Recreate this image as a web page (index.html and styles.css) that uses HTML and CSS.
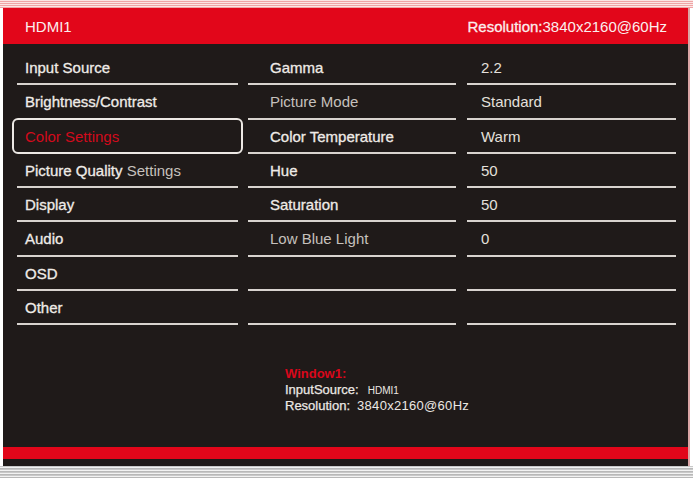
FILE: index.html
```html
<!DOCTYPE html>
<html>
<head>
<meta charset="utf-8">
<link rel="stylesheet" href="styles.css">
</head>
<body>
<div class="stripes-top"></div>
<div class="frame">
  <div class="header">
    <span class="src">HDMI1</span>
    <span class="res"><span class="strong">Resolution:</span>3840x2160@60Hz</span>
  </div>
  <div class="main">
    <div class="cols">
      <div class="col col-menu">
        <div class="row strong">Input Source</div>
        <div class="row strong before-sel">Brightness/Contrast</div>
        <div class="row selected">Color Settings</div>
        <div class="row"><span class="strong">Picture Quality</span> <span class="dim">Settings</span></div>
        <div class="row strong">Display</div>
        <div class="row strong">Audio</div>
        <div class="row strong">OSD</div>
        <div class="row strong">Other</div>
      </div>
      <div class="col col-param">
        <div class="row strong">Gamma</div>
        <div class="row dim">Picture Mode</div>
        <div class="row strong">Color Temperature</div>
        <div class="row strong">Hue</div>
        <div class="row strong">Saturation</div>
        <div class="row dim">Low Blue Light</div>
        <div class="row"></div>
        <div class="row"></div>
      </div>
      <div class="col col-value">
        <div class="row val">2.2</div>
        <div class="row val">Standard</div>
        <div class="row val">Warm</div>
        <div class="row val">50</div>
        <div class="row val">50</div>
        <div class="row val">0</div>
        <div class="row"></div>
        <div class="row"></div>
      </div>
    </div>
    <div class="info">
      <div class="info-title">Window1:</div>
      <div class="info-line">InputSource:<span class="small">HDMI1</span></div>
      <div class="info-line">Resolution:<span class="wide">3840x2160@60Hz</span></div>
    </div>
  </div>
  <div class="redbar"></div>
  <div class="darkstrip"></div>
</div>
<div class="stripes-bottom"></div>
</body>
</html>
```
FILE: styles.css
```css
html, body {
  margin: 0;
  padding: 0;
  background: #ffffff;
}
body {
  width: 693px;
  height: 478px;
  overflow: hidden;
  font-family: "Liberation Sans", Arial, sans-serif;
  font-size: 15px;
}
.stripes-top {
  height: 8px;
  background: repeating-linear-gradient(to bottom, #fbe6e4 0, #fbe6e4 1px, #f0a4a6 1px, #f0a4a6 2px);
}
.frame {
  margin-left: 3px;
  width: 685px;
  border-right: 2px solid #dba6a6;
}
.header {
  height: 36px;
  background: #e2061a;
  color: #fbeeee;
  display: flex;
  align-items: center;
  justify-content: space-between;
  padding: 0 22px 0 22px;
  box-sizing: border-box;
}
.header .res {
  margin-right: -1px;
}
.strong {
  -webkit-text-stroke: 0.3px currentColor;
}
.main {
  height: 403px;
  background: #1f1a19;
  box-sizing: border-box;
  padding-top: 7px;
  color: #efebe7;
}
.cols {
  display: flex;
  padding-left: 14px;
}
.col-menu { width: 221px; margin-right: 10px; }
.col-param { width: 208px; margin-right: 11px; }
.col-value { width: 209px; }
.row {
  height: 34.3px;
  padding-top: 2px;
  line-height: 30.3px;
  box-sizing: border-box;
  border-bottom: 2px solid #d8d3cf;
  white-space: nowrap;
}
.col-menu .row { padding-left: 8px; }
.col-param .row { padding-left: 22px; }
.col-value .row { padding-left: 14px; }
.dim {
  color: #c6c1bd;
  -webkit-text-stroke: 0;
}
.val { color: #e4e0dc; }
.col-menu .row.before-sel {
  border-bottom-color: transparent;
}
.col-menu .row.selected {
  margin: -2px -5px 0 -5px;
  height: 36.3px;
  border: 2px solid #ece8e4;
  border-radius: 6px;
  padding-left: 11px;
  color: #d20a1c;
}
.info {
  margin-top: 41px;
  margin-left: 282px;
  line-height: 15.5px;
  font-size: 13px;
  color: #ece8e4;
}
.info-title {
  color: #d9071b;
  font-weight: bold;
}
.info-line {
  -webkit-text-stroke: 0.25px currentColor;
}
.info .small {
  font-size: 10px;
  margin-left: 9px;
  -webkit-text-stroke: 0;
}
.info .wide {
  margin-left: 7px;
  letter-spacing: 0.3px;
  -webkit-text-stroke: 0;
}
.redbar {
  height: 12px;
  background: #e2061a;
}
.darkstrip {
  height: 7px;
  background: #1f1a19;
}
.stripes-bottom {
  height: 12px;
  background: repeating-linear-gradient(to bottom, #c9c9c9 0, #c9c9c9 1px, #f2f2f2 1px, #f2f2f2 2px, #b8b8b8 2px, #b8b8b8 3px);
}
```
